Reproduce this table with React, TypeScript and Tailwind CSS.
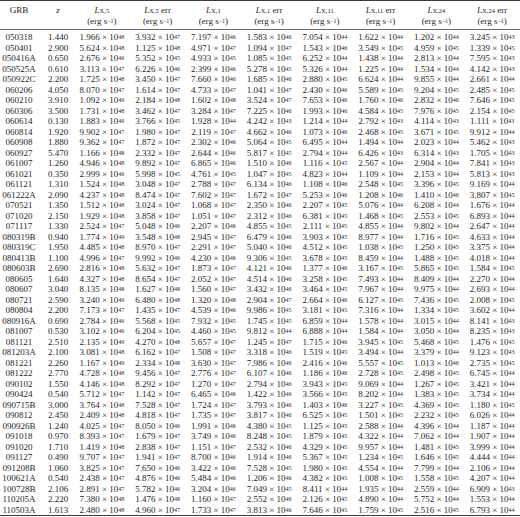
import React from "react";

type Row = [string, string, ...string[]];

const raw = `050318 1.440 1.966e48 3.932e47 7.197e46 1.583e46 7.054e44 1.622e44 1.202e44 3.245e43
050401 2.900 5.624e48 1.125e48 4.971e47 1.094e47 1.543e46 3.549e45 4.959e45 1.339e45
050416A 0.650 2.676e46 5.352e45 4.933e45 1.085e45 6.252e44 1.438e44 2.813e44 7.595e43
050525A 0.610 3.113e47 6.226e46 2.399e46 5.278e45 5.326e44 1.225e44 1.534e44 4.142e43
050922C 2.200 1.725e48 3.450e47 7.660e46 1.685e46 2.880e45 6.624e44 9.855e44 2.661e44
060206 4.050 8.070e47 1.614e47 4.733e47 1.041e47 2.430e46 5.589e45 9.204e45 2.485e45
060210 3.910 1.092e49 2.184e48 1.602e48 3.524e47 7.653e46 1.760e46 2.832e46 7.646e45
060306 3.500 1.731e48 3.462e47 3.284e47 7.225e46 1.993e46 4.584e45 7.976e45 2.154e45
060614 0.130 1.883e46 3.766e45 1.928e44 4.242e43 1.214e44 2.792e43 4.114e43 1.111e43
060814 1.920 9.902e47 1.980e47 2.119e47 4.662e46 1.073e46 2.468e45 3.671e45 9.912e44
060908 1.880 9.362e47 1.872e47 2.302e46 5.064e45 6.495e44 1.494e44 2.023e44 5.462e43
060927 5.470 1.166e48 2.332e47 2.644e46 5.817e45 2.794e44 6.426e43 6.314e43 1.705e43
061007 1.260 4.946e48 9.892e47 6.865e46 1.510e46 1.116e45 2.567e44 2.904e44 7.841e43
061021 0.350 2.999e46 5.998e45 4.761e45 1.047e45 4.823e44 1.109e44 2.153e44 5.813e43
061121 1.310 1.524e48 3.048e47 2.788e47 6.134e46 1.108e46 2.548e45 3.396e45 9.169e44
061222A 2.090 4.237e48 8.474e47 7.602e47 1.672e47 5.253e46 1.208e46 1.410e46 3.807e45
070521 1.350 1.512e48 3.024e47 1.068e47 2.350e46 2.207e45 5.076e44 6.208e44 1.676e44
071020 2.150 1.929e48 3.858e47 1.051e47 2.312e46 6.381e45 1.468e45 2.553e45 6.893e44
071117 1.330 2.524e47 5.048e46 2.207e46 4.855e45 2.111e45 4.855e44 9.802e44 2.647e44
080319B 0.940 1.774e49 3.548e48 2.945e47 6.479e46 3.903e45 8.977e44 1.716e45 4.633e44
080319C 1.950 4.485e48 8.970e47 2.291e47 5.040e46 4.512e45 1.038e45 1.250e45 3.375e44
080413B 1.100 4.996e47 9.992e46 4.230e46 9.306e45 3.678e45 8.459e44 1.488e45 4.018e44
080603B 2.690 2.816e48 5.632e47 1.873e47 4.121e46 1.377e46 3.167e45 5.865e45 1.584e45
080605 1.640 4.327e48 8.654e47 2.052e47 4.514e46 3.258e45 7.493e44 8.409e44 2.270e44
080607 3.040 8.135e48 1.627e48 1.560e47 3.432e46 3.464e45 7.967e44 9.975e44 2.693e44
080721 2.590 3.240e49 6.480e48 1.320e48 2.904e47 2.664e46 6.127e45 7.436e45 2.008e45
080804 2.200 7.173e47 1.435e47 4.539e46 9.986e45 3.181e45 7.316e44 1.334e45 3.602e44
080916A 0.690 2.784e46 5.568e45 7.932e45 1.745e45 6.859e44 1.578e44 3.015e44 8.141e43
081007 0.530 3.102e46 6.204e45 4.460e45 9.812e44 6.888e44 1.584e44 3.050e44 8.235e43
081121 2.510 2.135e49 4.270e48 5.657e47 1.245e47 1.715e46 3.945e45 5.468e45 1.476e45
081203A 2.100 3.081e48 6.162e47 1.508e47 3.318e46 1.519e45 3.494e44 3.379e44 9.123e43
081221 2.260 1.167e49 2.334e48 3.630e47 7.986e46 2.416e46 5.557e45 1.013e46 2.735e45
081222 2.770 4.728e48 9.456e47 2.776e47 6.107e46 1.186e46 2.728e45 2.498e45 6.745e44
090102 1.550 4.146e48 8.292e47 1.270e47 2.794e46 3.943e45 9.069e44 1.267e45 3.421e44
090424 0.540 5.712e47 1.142e47 6.465e46 1.422e46 3.566e45 8.202e44 1.383e45 3.734e44
090715B 3.000 3.764e48 7.528e47 1.724e47 3.793e46 1.403e46 3.227e45 4.369e45 1.180e45
090812 2.450 2.409e48 4.818e47 1.735e47 3.817e46 6.525e45 1.501e45 2.232e45 6.026e44
090926B 1.240 4.025e47 8.050e46 1.991e46 4.380e45 1.125e45 2.588e44 4.396e44 1.187e44
091018 0.970 8.393e47 1.679e47 3.749e46 8.248e45 1.879e45 4.322e44 7.062e44 1.907e44
091020 1.710 1.419e48 2.838e47 1.151e47 2.532e46 4.329e45 9.957e44 1.481e45 3.999e44
091127 0.490 9.707e47 1.941e47 8.700e46 1.914e46 5.367e45 1.234e45 1.646e45 4.444e44
091208B 1.060 3.825e47 7.650e46 3.422e46 7.528e45 1.980e45 4.554e44 7.799e44 2.106e44
100621A 0.540 2.438e47 4.876e46 5.484e46 1.206e46 4.382e45 1.008e45 1.558e45 4.207e44
100728B 2.106 2.891e47 5.782e46 3.204e46 7.049e45 8.411e44 1.935e44 2.559e44 6.909e43
110205A 2.220 7.380e48 1.476e48 1.160e47 2.552e46 2.126e45 4.890e44 5.752e44 1.553e44
110503A 1.613 2.480e48 4.960e47 1.733e47 3.813e46 7.646e45 1.759e45 2.516e45 6.793e44`;

const rows: Row[] = raw.split("\n").map((l) => l.trim().split(/\s+/) as Row);

const grid = "grid grid-cols-[38px_36px_repeat(8,55.75px)]";

function Val({ v }: { v: string }) {
  const [m, e] = v.split("e");
  return (
    <span className="whitespace-nowrap">
      {m} × 10<sup className="text-[6px] relative top-[-1px]">{e}</sup>
    </span>
  );
}

function LHead({ sub, err }: { sub: string; err?: boolean }) {
  return (
    <div className="flex flex-col items-center">
      <span className="h-[11px] whitespace-nowrap">
        <i>L</i>
        <sub className="text-[6.5px] relative top-[0px]">X,{sub}</sub>
        {err ? " err" : ""}
      </span>
      <span className="h-[11px] whitespace-nowrap">
        (erg s<sup className="text-[6px] relative top-[-1px]">−1</sup>)
      </span>
    </div>
  );
}

export default function App() {
  return (
    <div
      className="w-[520px] h-[517px] bg-white text-[#262626] text-[9px] overflow-hidden"
      style={{ fontFamily: '"Liberation Serif", "Times New Roman", serif' }}
    >
      <div className="border-t-[1.5px] border-[#3a3a3a]" />
      <div className={`${grid} pt-[4px] pb-[2px] h-[28px] leading-[11px] text-center`}>
        <div>GRB</div>
        <div className="pl-[4px]">
          <i>z</i>
        </div>
        <LHead sub="5" />
        <LHead sub="5" err />
        <LHead sub="1" />
        <LHead sub="1" err />
        <LHead sub="11" />
        <LHead sub="11" err />
        <LHead sub="24" />
        <LHead sub="24" err />
      </div>
      <div className="border-t border-[#6a6a6a]" />
      <div className="pt-[2px]">
        {rows.map((r) => (
          <div key={r[0]} className={`${grid} h-[10.5px] leading-[10.5px] text-center`}>
            <div>{r[0]}</div>
            <div className="pl-[4px]">{r[1]}</div>
            {r.slice(2).map((v, i) => (
              <div key={i}>
                <Val v={v} />
              </div>
            ))}
          </div>
        ))}
      </div>
      <div className="border-t-[1.5px] border-[#3a3a3a]" />
    </div>
  );
}
